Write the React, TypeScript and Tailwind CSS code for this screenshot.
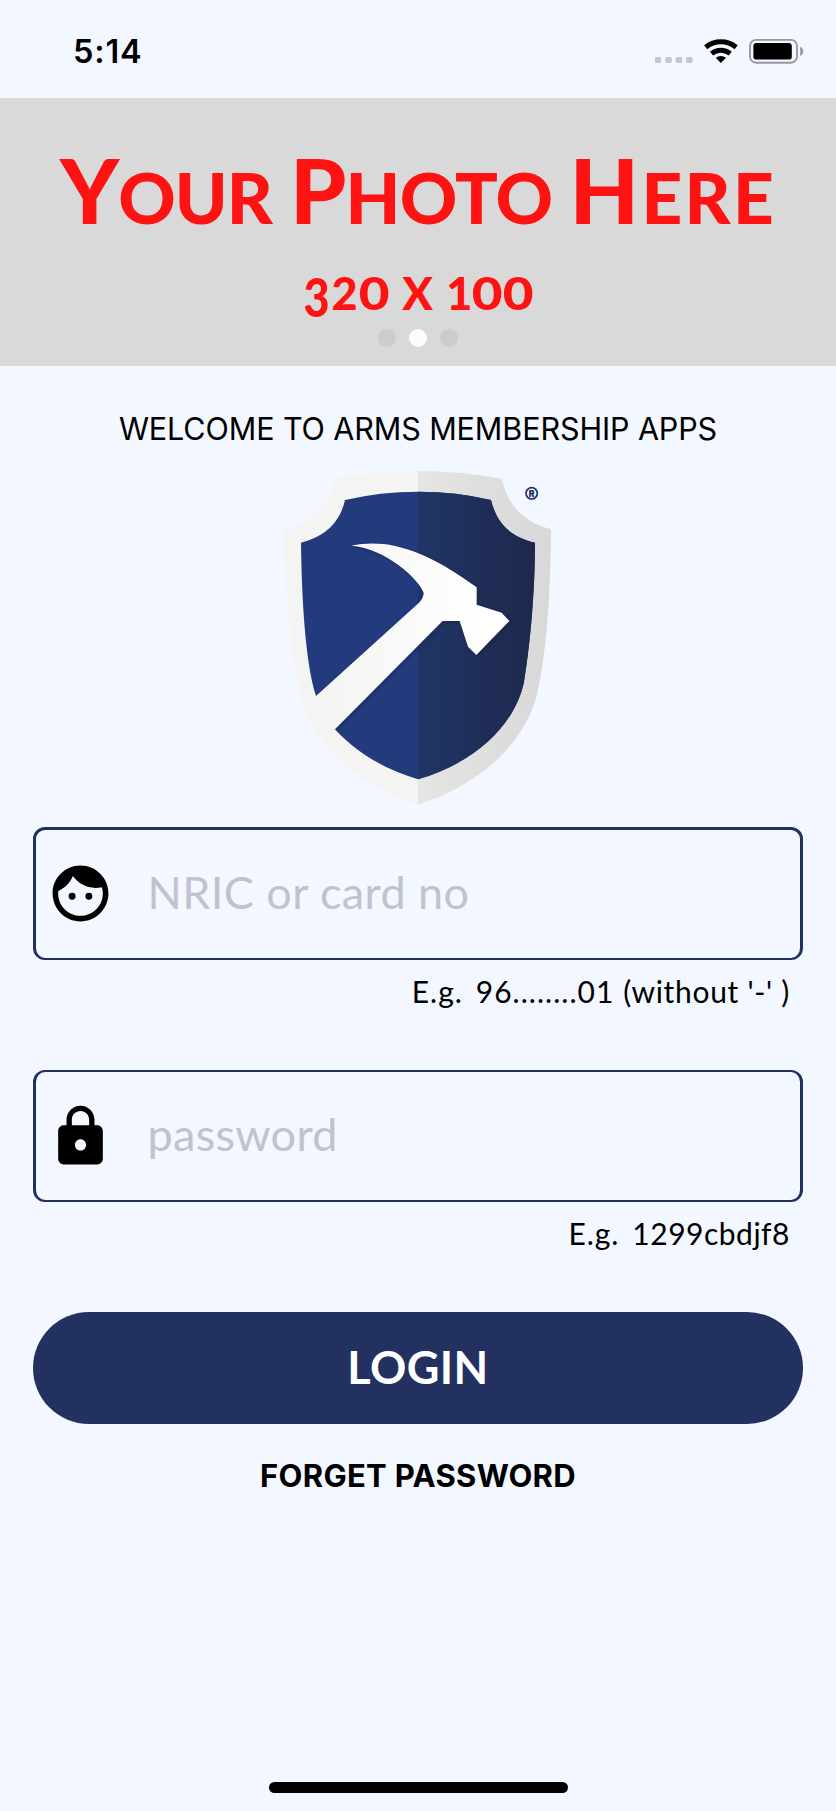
import React from "react";

function StatusIcons() {
  return (
    <svg className="h-[30px] w-[152px]" viewBox="0 0 152 30" aria-hidden="true">
      <g fill="#c3c6cf">
        <rect x="3" y="21" width="6" height="6" rx="1.4" />
        <rect x="13.3" y="21" width="6.4" height="6" rx="1.4" />
        <rect x="23.7" y="21" width="6.4" height="6" rx="1.4" />
        <rect x="34.1" y="21" width="6.4" height="6" rx="1.4" />
      </g>
      <g fill="none" stroke="#000" strokeWidth="5">
        <path d="M53.7 11.3 A24 24 0 0 1 84.1 11.3" />
        <path d="M59.6 17.6 A14.6 14.6 0 0 1 78.2 17.6" />
      </g>
      <path d="M68.9 27 L63.8 21.8 A8 8 0 0 1 74 21.8 Z" fill="#000" />
      <rect x="98" y="3.9" width="47" height="22.8" rx="6" fill="none" stroke="#96999f" strokeWidth="1.9" />
      <rect x="101.4" y="7" width="38.4" height="16.6" rx="3.2" fill="#000" />
      <path d="M148.2 10.8 Q151.2 12 151.2 15.3 Q151.2 18.8 148.2 20 Z" fill="#96999f" />
    </svg>
  );
}

const SHELL =
  "M195 72 Q315 48 444 48 Q575 48 695 72 C715 155 765 203 843 223 C842 400 832 570 805 700 C775 850 650 980 444 1050 C240 980 115 850 86 700 C59 570 45 400 43 223 C125 203 180 155 195 72 Z";
const FIELD =
  "M225 135 Q330 110 444 110 Q560 110 663 135 C680 205 720 245 795 263 C795 400 782 560 762 680 C740 790 640 915 444 973 C350 945 260 895 195 823 L138 723 C105 620 95 420 93 263 C170 243 210 200 225 135 Z";
const HAMMER =
  "M243 272 C350 250 460 280 620 397 L620 449 L695 473 L718 498 L619 600 L594 575 L569 498 L518 498 L195 823 L150 800 L138 723 L447 443 Q461 428 461 413 C448 375 350 280 243 272 Z";

function ShieldLogo() {
  return (
    <svg className="h-[360px] w-[300px]" viewBox="0 0 900 1080" role="img" aria-label="ARMS">
      <defs>
        <linearGradient id="silver" gradientUnits="userSpaceOnUse" x1="444" x2="843" y1="0" y2="0">
          <stop offset="0" stopColor="#e5e5e4" />
          <stop offset="1" stopColor="#d8d8d8" />
        </linearGradient>
        <linearGradient id="navy" gradientUnits="userSpaceOnUse" x1="444" x2="795" y1="0" y2="0">
          <stop offset="0" stopColor="#203566" />
          <stop offset="1" stopColor="#1e284c" />
        </linearGradient>
        <linearGradient id="steel" gradientUnits="userSpaceOnUse" x1="150" x2="640" y1="0" y2="0">
          <stop offset="0" stopColor="#f4f4f3" />
          <stop offset="1" stopColor="#ffffff" />
        </linearGradient>
        <clipPath id="right">
          <rect x="444" y="0" width="456" height="1080" />
        </clipPath>
        <clipPath id="field">
          <path d={FIELD} />
        </clipPath>
        <filter id="soft" x="-10%" y="-10%" width="120%" height="120%">
          <feGaussianBlur stdDeviation="4" />
        </filter>
      </defs>
      <path d={SHELL} fill="#f4f4f2" />
      <path d={SHELL} fill="url(#silver)" clipPath="url(#right)" />
      <path d={FIELD} fill="#233a7c" />
      <path d={FIELD} fill="url(#navy)" clipPath="url(#right)" />
      <g clipPath="url(#field)">
        <path d={HAMMER} fill="#131c3a" opacity="0.45" filter="url(#soft)" transform="translate(4 3)" />
      </g>
      <path d={HAMMER} fill="url(#steel)" />
      <circle cx="785" cy="115" r="17" fill="none" stroke="#1f3063" strokeWidth="5" />
      <text x="785" y="124.5" textAnchor="middle" fontSize="26" className="font-['Inter'] font-black" fill="#1f3063">
        R
      </text>
    </svg>
  );
}

function FaceIcon() {
  return (
    <svg className="-mt-px size-[67px] shrink-0" viewBox="0 0 24 24" aria-hidden="true">
      <path d="M9 11.75a1.25 1.25 0 1 0 0 2.5 1.25 1.25 0 0 0 0-2.5zm6 0a1.25 1.25 0 1 0 0 2.5 1.25 1.25 0 0 0 0-2.5zM12 2C6.48 2 2 6.48 2 12s4.48 10 10 10 10-4.48 10-10S17.52 2 12 2zm0 18c-4.41 0-8-3.59-8-8 0-.29.02-.58.05-.86 2.36-1.05 4.23-2.98 5.21-5.37C11.07 8.33 14.05 10 17.42 10c.78 0 1.53-.09 2.25-.26.21.71.33 1.47.33 2.26 0 4.41-3.59 8-8 8z" />
    </svg>
  );
}

function LockIcon() {
  return (
    <svg className="size-[67px] shrink-0" viewBox="0 0 24 24" aria-hidden="true">
      <path d="M18 8h-1V6c0-2.76-2.24-5-5-5S7 3.24 7 6v2H6c-1.1 0-2 .9-2 2v10c0 1.1.9 2 2 2h12c1.1 0 2-.9 2-2V10c0-1.1-.9-2-2-2zm-6 9c-1.1 0-2-.9-2-2s.9-2 2-2 2 .9 2 2-.9 2-2 2zm3.1-9H8.9V6c0-1.71 1.39-3.1 3.1-3.1s3.1 1.39 3.1 3.1v2z" />
    </svg>
  );
}

function Zero() {
  return <span className="mx-[1.5px] inline-block scale-x-[1.18]">0</span>;
}

export default function App() {
  return (
    <main className="flex h-[1811px] w-[836px] flex-col items-center bg-[#f3f7ff] font-['Inter',sans-serif] text-black">
      <header className="flex h-[98px] w-full shrink-0 items-start justify-between pt-[36px] pr-[32px] pl-[73px]">
        <time className="text-[32.5px] leading-[31px] font-semibold tracking-[0.8px]">5:14</time>
        <StatusIcons />
      </header>

      <section className="flex h-[268px] w-full shrink-0 flex-col items-center bg-[#d9d9d9] font-['Lato',sans-serif] font-black text-[#ff1212]">
        <h1 className="mt-[46px] flex h-[90px] w-[716px] items-baseline text-[71px] leading-[90px] whitespace-nowrap">
          <span className="w-[231px] tracking-[-1px]"><span className="text-[90px]">Y</span>OUR</span>
          <span className="w-[281px] tracking-[-0.8px]"><span className="text-[90px]">P</span>HOTO</span>
          <span className="tracking-[2.3px]"><span className="text-[90px]">H</span>ERE</span>
        </h1>
        <p className="mt-[32px] flex h-[54px] w-[229px] items-baseline justify-between text-[45px] leading-[54px]">
          <span><span className="inline-block origin-[50%_11px] scale-y-[1.2]">3</span><span className="mx-[2px]">2</span><Zero /></span>
          <span>X</span>
          <span>1<Zero /><span className="ml-[2px]"><Zero /></span></span>
        </p>
        <div className="mt-[9px] flex gap-[13px]">
          <i className="size-[18px] rounded-full bg-[#cccccc]" />
          <i className="size-[18px] rounded-full bg-[#fcfcfc]" />
          <i className="size-[18px] rounded-full bg-[#cccccc]" />
        </div>
      </section>

      <h2 className="mt-[43px] h-[40px] shrink-0 text-[30.5px] leading-[40px] whitespace-nowrap tracking-[-0.1px]">WELCOME TO ARMS MEMBERSHIP APPS</h2>
      <div className="mt-[6px] ml-[4px] h-[360px] w-[300px] shrink-0">
        <ShieldLogo />
      </div>

      <form className="flex w-[770px] flex-col font-['Lato',sans-serif]" onSubmit={(e) => e.preventDefault()}>
        <label className="mt-[12px] flex h-[133px] items-center rounded-[12px] border-3 border-b-2 border-[#20315f] pl-[10.5px]">
          <FaceIcon />
          <input
            className="mb-[3px] ml-[34px] w-[600px] bg-transparent text-[45px] tracking-[0.4px] outline-none placeholder:text-[#bfc3ce]"
            placeholder="NRIC or card no"
          />
        </label>
        <p className="mt-[11px] mr-[13px] h-[41px] text-right text-[30px] leading-[40px] tracking-[1.05px]"><span className="mr-[4px]">E.g.</span> 96........01 <span className="tracking-[0.7px]">(without '-' )</span></p>
        <label className="mt-[58px] flex h-[132px] items-center rounded-[12px] border-x-3 border-y-2 border-[#20315f] pl-[10.5px]">
          <LockIcon />
          <input
            className="mb-[3px] ml-[34px] w-[600px] bg-transparent text-[45px] tracking-[0.3px] outline-none placeholder:text-[#bfc3ce]"
            placeholder="password"
            type="password"
          />
        </label>
        <p className="mt-[11px] mr-[13px] h-[41px] text-right text-[30px] leading-[40px] tracking-[0.5px]"><span className="mr-[5px] tracking-[0.9px]">E.g.</span> 1299cbdjf8</p>
        <button type="submit" className="mt-[58px] h-[112px] rounded-full bg-[#22315f] pb-[1px] text-[45px] font-bold tracking-[0.4px] text-white">
          LOGIN
        </button>
      </form>

      <a className="mt-[32px] text-[31px] leading-[40px] font-bold tracking-[0.3px] whitespace-nowrap">FORGET PASSWORD</a>
      <div className="mt-auto mb-[18px] h-[11px] w-[299px] shrink-0 rounded-full bg-black" />
    </main>
  );
}
